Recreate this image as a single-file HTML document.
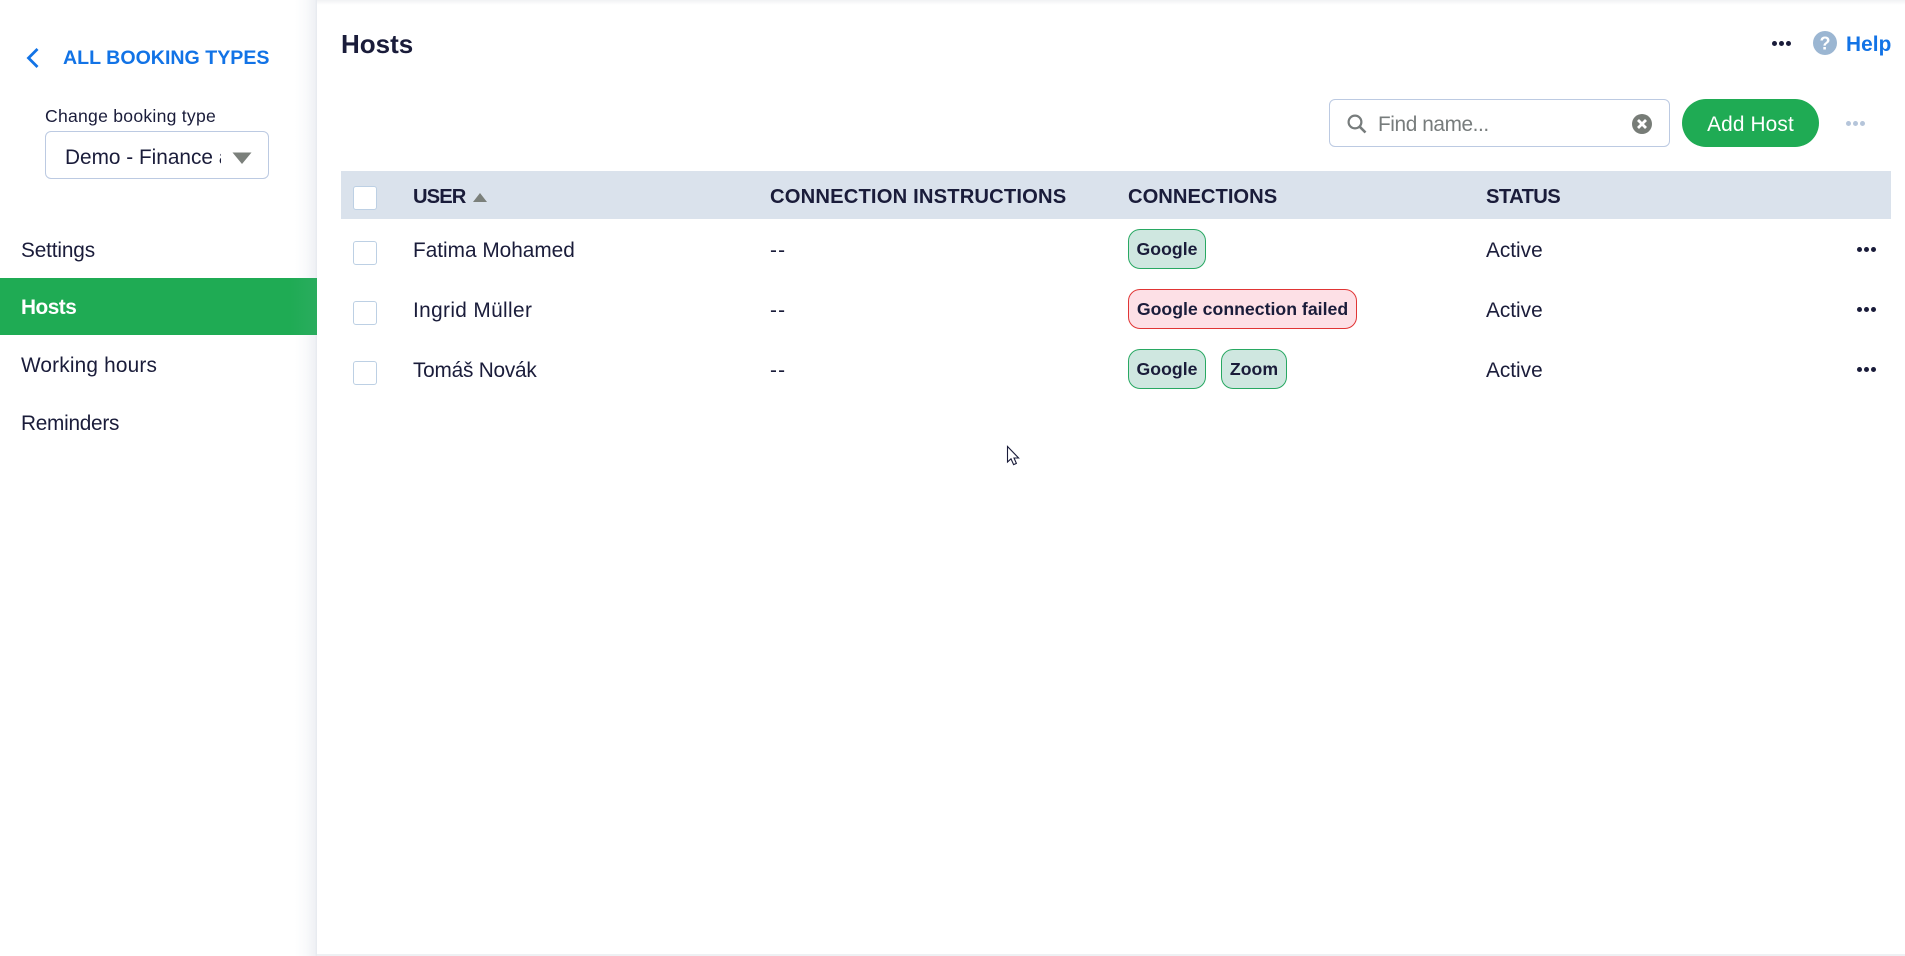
<!DOCTYPE html>
<html lang="en">
<head>
<meta charset="utf-8">
<title>Hosts</title>
<style>
html,body{margin:0;padding:0;background:#fff}
body{width:1905px;height:956px;position:relative;overflow:hidden;font-family:"Liberation Sans",sans-serif;font-size:20.8px;color:#1a1c3a}
.a{position:absolute;white-space:nowrap}
.t{position:absolute;white-space:nowrap;line-height:30px;height:30px}
.b{font-weight:700}
.cb{position:absolute;left:353px;width:24px;height:24px;box-sizing:border-box;background:#fff;border:1px solid #bdd0e4;border-radius:3px}
.pill{position:absolute;height:40px;box-sizing:border-box;border-radius:12px;border:1px solid #28a862;background:#cfe7e0;font-weight:700;font-size:17.7px;line-height:38px;text-align:center;white-space:nowrap}
.red{background:#fde0e6;border-color:#e03535}
.dots{position:absolute;width:20px;height:6px}
.dots i{position:absolute;top:0;width:5.2px;height:5.2px;border-radius:50%;background:#1a1c3a}
.dots i:nth-child(1){left:0}.dots i:nth-child(2){left:7px}.dots i:nth-child(3){left:14px}
.hd{font-weight:700;font-size:20.2px}
.dd{letter-spacing:1.2px}
</style>
</head>
<body>
<div class="a" style="left:0;top:0;width:1905px;height:5px;background:linear-gradient(#f1f2f4,#fff)"></div>
<div class="a" style="left:0;top:954px;width:1905px;height:2px;background:#eef0f3"></div>

<!-- sidebar -->
<div class="a" style="left:0;top:0;width:317px;height:956px;background:linear-gradient(to right,#fff 0,#fff 295px,#f9fafb 306px,#eff1f5 315px,#e6e9ee 317px)"></div>
<svg class="a" style="left:25px;top:46px" width="16" height="24" viewBox="0 0 16 24"><path d="M12.5 3 L3.5 12 L12.5 21" fill="none" stroke="#1273e6" stroke-width="2.8"/></svg>
<div class="t b" style="left:63px;top:43px;color:#1273e6;font-size:19.6px">ALL BOOKING TYPES</div>
<div class="t" style="left:45px;top:101px;font-size:17.6px;letter-spacing:.25px">Change booking type</div>
<div class="a" style="left:45px;top:131px;width:224px;height:48px;box-sizing:border-box;background:#fff;border:1px solid #bccae2;border-radius:6px"></div>
<div class="t" style="left:65px;top:143px;width:156px;overflow:hidden">Demo - Finance and</div>
<svg class="a" style="left:232px;top:152px" width="20" height="12" viewBox="0 0 20 12"><path d="M0.5 0.5 H19.5 L10 12 Z" fill="#7b807b"/></svg>

<div class="t" style="left:21px;top:236px;letter-spacing:-.15px">Settings</div>
<div class="a" style="left:0;top:278px;width:317px;height:57px;background:linear-gradient(to right,#1fab54 0,#1fab54 290px,#2aac5e 317px)"></div>
<div class="t b" style="left:21px;top:293px;color:#fff;letter-spacing:-.5px">Hosts</div>
<div class="t" style="left:21px;top:351px;letter-spacing:.18px">Working hours</div>
<div class="t" style="left:21px;top:409px;letter-spacing:-.27px">Reminders</div>

<!-- header -->
<div class="t b" style="left:341px;top:29px;font-size:26px">Hosts</div>
<div class="dots" style="left:1772px;top:41px"><i></i><i></i><i></i></div>
<svg class="a" style="left:1813px;top:31px" width="24" height="24" viewBox="0 0 24 24"><circle cx="12" cy="12" r="12" fill="#9bb6d2"/><text x="12" y="18.5" font-family="Liberation Sans,sans-serif" font-weight="700" font-size="18" fill="#fff" text-anchor="middle">?</text></svg>
<div class="t b" style="left:1846px;top:30px;color:#1273e6;font-size:20.8px;letter-spacing:.1px">Help</div>

<!-- toolbar -->
<div class="a" style="left:1329px;top:99px;width:341px;height:48px;box-sizing:border-box;background:#fff;border:1px solid #bccae2;border-radius:6px"></div>
<svg class="a" style="left:1346px;top:113px" width="22" height="22" viewBox="0 0 22 22"><circle cx="9" cy="9" r="6.4" fill="none" stroke="#777c7c" stroke-width="2.2"/><path d="M13.6 13.6 L19.5 19.5" stroke="#777c7c" stroke-width="2.6" fill="none"/></svg>
<div class="t" style="left:1378px;top:110px;color:#777c7c;letter-spacing:-.4px">Find name...</div>
<svg class="a" style="left:1632px;top:114px" width="20" height="20" viewBox="0 0 20 20"><circle cx="10" cy="10" r="10" fill="#777c77"/><path d="M6 6 L14 14 M14 6 L6 14" stroke="#fff" stroke-width="2.8"/></svg>
<div class="a" style="left:1682px;top:99px;width:137px;height:48px;border-radius:24px;background:#1fab54;color:#fff;text-align:center;line-height:52px;letter-spacing:.15px">Add Host</div>
<div class="dots" style="left:1846px;top:121px"><i style="background:#b5c5da"></i><i style="background:#b5c5da"></i><i style="background:#b5c5da"></i></div>

<!-- table -->
<div class="a" style="left:341px;top:171px;width:1550px;height:48px;background:#dae2ec"></div>
<div class="cb" style="top:186px"></div>
<div class="t hd" style="left:413px;top:182px;letter-spacing:-.9px">USER</div>
<svg class="a" style="left:473px;top:193px" width="14" height="9" viewBox="0 0 14 9"><path d="M7 0 L14 9 H0 Z" fill="#7b807b"/></svg>
<div class="t hd" style="left:770px;top:182px;letter-spacing:.16px">CONNECTION INSTRUCTIONS</div>
<div class="t hd" style="left:1128px;top:182px">CONNECTIONS</div>
<div class="t hd" style="left:1486px;top:182px;letter-spacing:-.6px">STATUS</div>

<div class="cb" style="top:241px"></div>
<div class="t" style="left:413px;top:236px">Fatima Mohamed</div>
<div class="t dd" style="left:770px;top:236px">--</div>
<div class="pill" style="left:1128px;top:229px;width:78px">Google</div>
<div class="t" style="left:1486px;top:236px">Active</div>
<div class="dots" style="left:1857px;top:247px"><i></i><i></i><i></i></div>

<div class="cb" style="top:301px"></div>
<div class="t" style="left:413px;top:296px;letter-spacing:.37px">Ingrid Müller</div>
<div class="t dd" style="left:770px;top:296px">--</div>
<div class="pill red" style="left:1128px;top:289px;width:229px">Google connection failed</div>
<div class="t" style="left:1486px;top:296px">Active</div>
<div class="dots" style="left:1857px;top:307px"><i></i><i></i><i></i></div>

<div class="cb" style="top:361px"></div>
<div class="t" style="left:413px;top:356px;letter-spacing:-.22px">Tomáš Novák</div>
<div class="t dd" style="left:770px;top:356px">--</div>
<div class="pill" style="left:1128px;top:349px;width:78px">Google</div>
<div class="pill" style="left:1221px;top:349px;width:66px">Zoom</div>
<div class="t" style="left:1486px;top:356px">Active</div>
<div class="dots" style="left:1857px;top:367px"><i></i><i></i><i></i></div>

<!-- cursor -->
<svg class="a" style="left:1006px;top:445px" width="14" height="22" viewBox="0 0 14 22"><path d="M1.5 1.5 V17 L5 13.8 L7.6 19.6 L10.4 18.4 L8 13 L12.6 13 Z" fill="#fff" stroke="#1a1c3a" stroke-width="1.1"/></svg>
</body>
</html>
